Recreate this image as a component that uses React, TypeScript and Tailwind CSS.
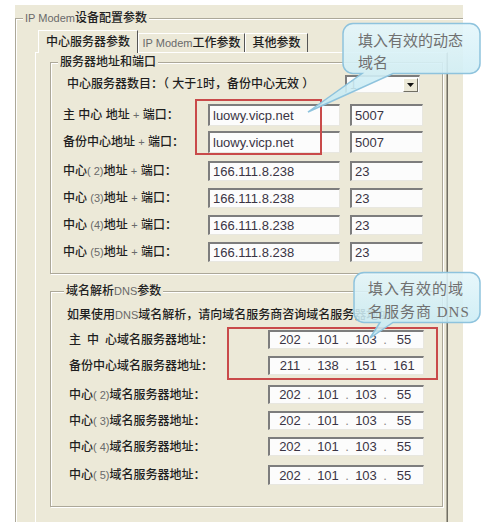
import React from "react";

const ui = "font-['Liberation_Sans','Noto_Sans_CJK_SC',sans-serif]";
const serif = "font-['Liberation_Serif','Noto_Sans_CJK_SC',serif]";

const Lat = ({ children }: { children: React.ReactNode }) => (
  <span className="text-[11px] font-normal text-[#6a6a6a]">{children}</span>
);

const Sunken = ({ className = "", children }: { className?: string; children?: React.ReactNode }) => (
  <div
    className={`flex items-center font-normal bg-[#fcfcfc] border-t-2 border-l-2 border-r border-b border-t-[#7d7d7d] border-l-[#7d7d7d] border-r-[#e8e7e0] border-b-[#e8e7e0] ${className}`}
  >
    {children}
  </div>
);

const Group = ({
  title,
  titleLeft,
  className,
  children,
}: {
  title: React.ReactNode;
  titleLeft: string;
  className: string;
  children: React.ReactNode;
}) => (
  <div className={`relative border border-[#aca899] shadow-[1px_1px_0_#fff,inset_1px_1px_0_#fff] ${className}`}>
    <span className={`absolute -top-[10px] ${titleLeft} bg-[#ECE9D8] px-[2px] leading-[18px] text-[12px] text-[#222] whitespace-nowrap`}>
      {title}
    </span>
    {children}
  </div>
);

const addrRows = [
  { label: <>主 中心 地址 <Lat>+</Lat> 端口：</>, addr: "luowy.vicp.net", port: "5007", mt: "mt-[11px]", h: "h-[22px]" },
  { label: <>备份中心地址 <Lat>+</Lat> 端口：</>, addr: "luowy.vicp.net", port: "5007", mt: "mt-[5px]", h: "h-[22px]" },
  { label: <>中心<Lat>( 2)</Lat>地址 <Lat>+</Lat> 端口：</>, addr: "166.111.8.238", port: "23", mt: "mt-[8px]", h: "h-[20px]" },
  { label: <>中心 <Lat>(3)</Lat>地址 <Lat>+</Lat> 端口：</>, addr: "166.111.8.238", port: "23", mt: "mt-[7px]", h: "h-[20px]" },
  { label: <>中心 <Lat>(4)</Lat>地址 <Lat>+</Lat> 端口：</>, addr: "166.111.8.238", port: "23", mt: "mt-[7px]", h: "h-[20px]" },
  { label: <>中心 <Lat>(5)</Lat>地址 <Lat>+</Lat> 端口：</>, addr: "166.111.8.238", port: "23", mt: "mt-[7px]", h: "h-[20px]" },
];

const dnsRows = [
  {
    label: (
      <>
        <span className="mr-[6px]">主</span>
        <span className="mr-[6px]">中</span>心域名服务器地址：
      </>
    ),
    ip: ["202", "101", "103", "55"],
    mt: "mt-[7px]",
    h: "h-[19px]",
  },
  { label: <>备份中心域名服务器地址：</>, ip: ["211", "138", "151", "161"], mt: "mt-[7px]", h: "h-[19px]" },
  { label: <>中心<Lat>( 2)</Lat>域名服务器地址：</>, ip: ["202", "101", "103", "55"], mt: "mt-[10px]", h: "h-[19px]" },
  { label: <>中心<Lat>( 3)</Lat>域名服务器地址：</>, ip: ["202", "101", "103", "55"], mt: "mt-[7px]", h: "h-[19px]" },
  { label: <>中心<Lat>( 4)</Lat>域名服务器地址：</>, ip: ["202", "101", "103", "55"], mt: "mt-[7px]", h: "h-[19px]" },
  { label: <>中心<Lat>( 5)</Lat>域名服务器地址：</>, ip: ["202", "101", "103", "55"], mt: "mt-[9px]", h: "h-[20px]" },
];

const IpField = ({ parts, h }: { parts: string[]; h: string }) => (
  <Sunken className={`w-[156px] ${h} pl-[5px] text-[13px] text-[#3a3444]`}>
    {parts.map((p, i) => (
      <React.Fragment key={i}>
        {i > 0 && <span className="w-[8px] text-center text-[#888]">.</span>}
        <span className="w-[30px] text-center">{p}</span>
      </React.Fragment>
    ))}
  </Sunken>
);

export default function App() {
  return (
    <div className={`relative w-[500px] h-[522px] overflow-hidden bg-white ${ui}`}>
      <div className="ml-[15px] mt-[5px] w-[448px] h-[517px] bg-[#ECE9D8] pt-[13px]">
        {/* outer group box */}
        <div className="relative h-[504px] border-l border-t border-[#aca899] shadow-[inset_1px_1px_0_#fff]">
          <span className="absolute -top-[10px] left-[7px] bg-[#ECE9D8] px-[2px] leading-[18px] text-[12px] font-medium text-[#222]">
            <Lat>IP Modem</Lat>设备配置参数
          </span>

          <div className="ml-[19px] mt-[11px] w-[413px]">
            {/* tab strip */}
            <div className="flex items-end h-[22px] pl-[3px] text-[12px] font-medium text-[#1e1e1e]">
              <div className="relative z-10 -mb-px h-[23px] w-[100px] flex items-center justify-center pb-[1px] bg-[#ECE9D8] border-l border-t border-r border-l-white border-t-white border-r-[#555]">
                中心服务器参数
              </div>
              <div className="h-[19px] w-[107px] flex items-center justify-center border-l border-t border-r border-l-white border-t-white border-r-[#555]">
                <Lat>IP Modem</Lat>工作参数
              </div>
              <div className="h-[19px] w-[63px] flex items-center justify-center border-l border-t border-r border-l-white border-t-white border-r-[#555]">
                其他参数
              </div>
            </div>

            {/* tab page */}
            <div className="h-[470px] border-l border-t border-r border-l-white border-t-white border-r-[#716f64] shadow-[inset_-1px_0_0_#aca899] pt-[9px] pl-[14px] text-[12px] font-medium text-[#1e1e1e]">
              <Group title="服务器地址和端口" titleLeft="left-[7px]" className="w-[393px] h-[212px]">
                <div className="mt-[12px] h-[18px] flex items-center pl-[16px]">
                  <span className="w-[278px] whitespace-nowrap">中心服务器数目：（ 大于1时，备份中心无效 ）</span>
                  <Sunken className="w-[75px] h-[18px] justify-between">
                    <span className="pl-[3px] text-[12px] text-[#333]">1</span>
                    <div className="w-[15px] h-[14px] mr-[1px] flex items-center justify-center bg-[#ECE9D8] border border-t-white border-l-white border-r-[#716f64] border-b-[#716f64]">
                      <svg width="7" height="4" viewBox="0 0 7 4">
                        <path d="M0 0H7L3.5 4Z" fill="#111" />
                      </svg>
                    </div>
                  </Sunken>
                </div>
                {addrRows.map((r, i) => (
                  <div key={i} className={`${r.mt} ${r.h} flex items-center pl-[12px]`}>
                    <span className="w-[145px] whitespace-nowrap">{r.label}</span>
                    <Sunken className={`w-[132px] ${r.h} pl-[3px] text-[13px] text-[#3a3444]`}>{r.addr}</Sunken>
                    <Sunken className={`ml-[10px] w-[73px] ${r.h} pl-[3px] text-[13px] text-[#3a3444]`}>{r.port}</Sunken>
                  </div>
                ))}
              </Group>

              <Group
                title={<>域名解析<Lat>DNS</Lat>参数</>}
                titleLeft="left-[13px]"
                className="mt-[17px] w-[393px] h-[216px]"
              >
                <div className="mt-[15px] h-[16px] flex items-center pl-[16px] whitespace-nowrap">
                  如果使用<Lat>DNS</Lat>域名解析，请向域名服务商咨询域名服务器地址
                </div>
                {dnsRows.map((r, i) => (
                  <div key={i} className={`${r.mt} ${r.h} flex items-center pl-[18px]`}>
                    <span className="w-[199px] whitespace-nowrap">{r.label}</span>
                    <IpField parts={r.ip} h={r.h} />
                  </div>
                ))}
              </Group>
            </div>
          </div>
        </div>
      </div>

      {/* red highlight boxes */}
      <div className="absolute left-[195px] top-[99px] w-[127px] h-[56px] border-2 border-[#c94a4a]" />
      <div className="absolute left-[227px] top-[327px] w-[211px] h-[53px] border-2 border-[#c94a4a]" />

      {/* callout 1 */}
      <div className="absolute left-[300px] top-[20px] w-[185px] h-[95px]">
        <svg className="absolute inset-0" width="185" height="95" viewBox="0 0 185 95">
          <defs>
            <linearGradient id="cb1" x1="0" y1="0" x2="0" y2="1">
              <stop offset="0" stopColor="#e4f6fb" />
              <stop offset="1" stopColor="#c3e9f2" />
            </linearGradient>
          </defs>
          <path
            d="M53 3.5H170a10 10 0 0 1 10 10V43.5a10 10 0 0 1-10 10H93L8 92L62 53.5H53a10 10 0 0 1-10-10V13.5a10 10 0 0 1 10-10Z"
            fill="url(#cb1)"
            fillOpacity="0.9"
            stroke="#8ec3dd"
            strokeWidth="1.5"
          />
        </svg>
        <div className={`absolute left-[58px] top-[10px] text-[15px] leading-[22px] text-[#707070] whitespace-nowrap ${serif}`}>
          填入有效的动态
          <br />
          域名
        </div>
      </div>

      {/* callout 2 */}
      <div className="absolute left-[340px] top-[265px] w-[145px] h-[80px]">
        <svg className="absolute inset-0" width="145" height="80" viewBox="0 0 145 80">
          <defs>
            <linearGradient id="cb2" x1="0" y1="0" x2="0" y2="1">
              <stop offset="0" stopColor="#e4f6fb" />
              <stop offset="1" stopColor="#c3e9f2" />
            </linearGradient>
          </defs>
          <path
            d="M24 7.5H130a10 10 0 0 1 10 10V47.5a10 10 0 0 1-10 10H53L30 73L40 57.5H24a10 10 0 0 1-10-10V17.5a10 10 0 0 1 10-10Z"
            fill="url(#cb2)"
            fillOpacity="0.88"
            stroke="#8ec3dd"
            strokeWidth="1.5"
          />
        </svg>
        <div className={`absolute left-[28px] top-[13px] text-[15px] leading-[23px] tracking-[1px] text-[#707070] whitespace-nowrap ${serif}`}>
          填入有效的域
          <br />
          名服务商 DNS
        </div>
      </div>
    </div>
  );
}
